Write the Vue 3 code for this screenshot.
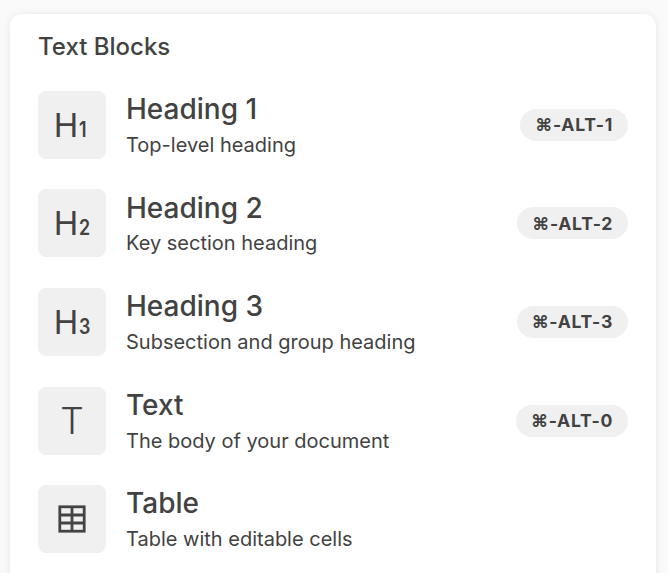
<script setup>
const items = [
  { id: 'h1', title: 'Heading 1', desc: 'Top-level heading', letter: 'H', digit: '1', keys: '⌘-ALT-1' },
  { id: 'h2', title: 'Heading 2', desc: 'Key section heading', letter: 'H', digit: '2', keys: '⌘-ALT-2' },
  { id: 'h3', title: 'Heading 3', desc: 'Subsection and group heading', letter: 'H', digit: '3', keys: '⌘-ALT-3' },
  { id: 'text', title: 'Text', desc: 'The body of your document', letter: 'T', digit: '', keys: '⌘-ALT-0' },
  { id: 'table', title: 'Table', desc: 'Table with editable cells', letter: '', digit: '', keys: '' },
]
</script>

<template>
  <div class="page">
    <div class="card">
      <h2 class="card-title">Text Blocks</h2>
      <ul class="list">
        <li v-for="item in items" :key="item.id" class="row">
          <div class="icon">
            <svg v-if="item.id === 'table'" class="table-icon" viewBox="0 0 28 28" fill="none" stroke="#444" stroke-width="2.8">
              <rect x="1.8" y="1.8" width="24.4" height="24.4" />
              <path d="M1.8 10h24.4M1.8 18h24.4M14 1.8v24.4" />
            </svg>
            <template v-else>
              <span class="letter" :class="{ wide: item.id === 'text' }">{{ item.letter }}</span><span v-if="item.digit" class="digit">{{ item.digit }}</span>
            </template>
          </div>
          <div class="info">
            <div class="title">{{ item.title }}</div>
            <div class="desc">{{ item.desc }}</div>
          </div>
          <span v-if="item.keys" class="keys">{{ item.keys }}</span>
        </li>
      </ul>
    </div>
  </div>
</template>

<style scoped>
.page {
  height: 573px;
  overflow: hidden;
  padding: 14px 12px 0 10px;
  box-sizing: border-box;
  background: #fafafa;
  font-family: Inter, "Liberation Sans", sans-serif;
  color: #424242;
}

.card {
  height: 600px;
  box-sizing: border-box;
  padding: 18px 28px 0;
  background: #fff;
  border-radius: 12px;
  box-shadow: 0 0 8px rgba(0, 0, 0, 0.08);
}

.card-title {
  margin: 0;
  font-size: 24px;
  line-height: 30px;
  font-weight: 500;
}

.list {
  list-style: none;
  margin: 28.8px 0 0;
  padding: 0;
  display: flex;
  flex-direction: column;
  gap: 30.6px;
}

.row {
  display: flex;
  align-items: center;
  height: 68px;
}

.icon {
  flex-shrink: 0;
  width: 68px;
  height: 68px;
  display: flex;
  align-items: baseline;
  justify-content: center;
  box-sizing: border-box;
  padding-top: 15px;
  margin-right: 20px;
  background: #f0f0f0;
  border-radius: 8px;
}

.letter {
  font-size: 33px;
  line-height: 38px;
  font-weight: 400;
}

.letter.wide {
  font-size: 37px;
  font-weight: 300;
}

.digit {
  display: inline-block;
  width: 11px;
  font-size: 21px;
  line-height: 38px;
  font-weight: 600;
  transform: scaleX(0.85);
  transform-origin: left;
  margin-left: 1px;
}

.table-icon {
  width: 28px;
  height: 28px;
  margin-top: 5px;
}

.info {
  flex: 1;
  min-width: 0;
  align-self: flex-start;
  margin-top: 1.2px;
}

.title {
  font-size: 28px;
  line-height: 34px;
  font-weight: 500;
}

.desc {
  font-size: 20px;
  line-height: 28px;
  margin-top: 4.8px;
}

.keys {
  flex-shrink: 0;
  height: 32px;
  padding: 0 15px;
  display: flex;
  align-items: center;
  background: #f0f0f0;
  border-radius: 16px;
  font-size: 17.6px;
  font-weight: 700;
  letter-spacing: 0.7px;
}
</style>
